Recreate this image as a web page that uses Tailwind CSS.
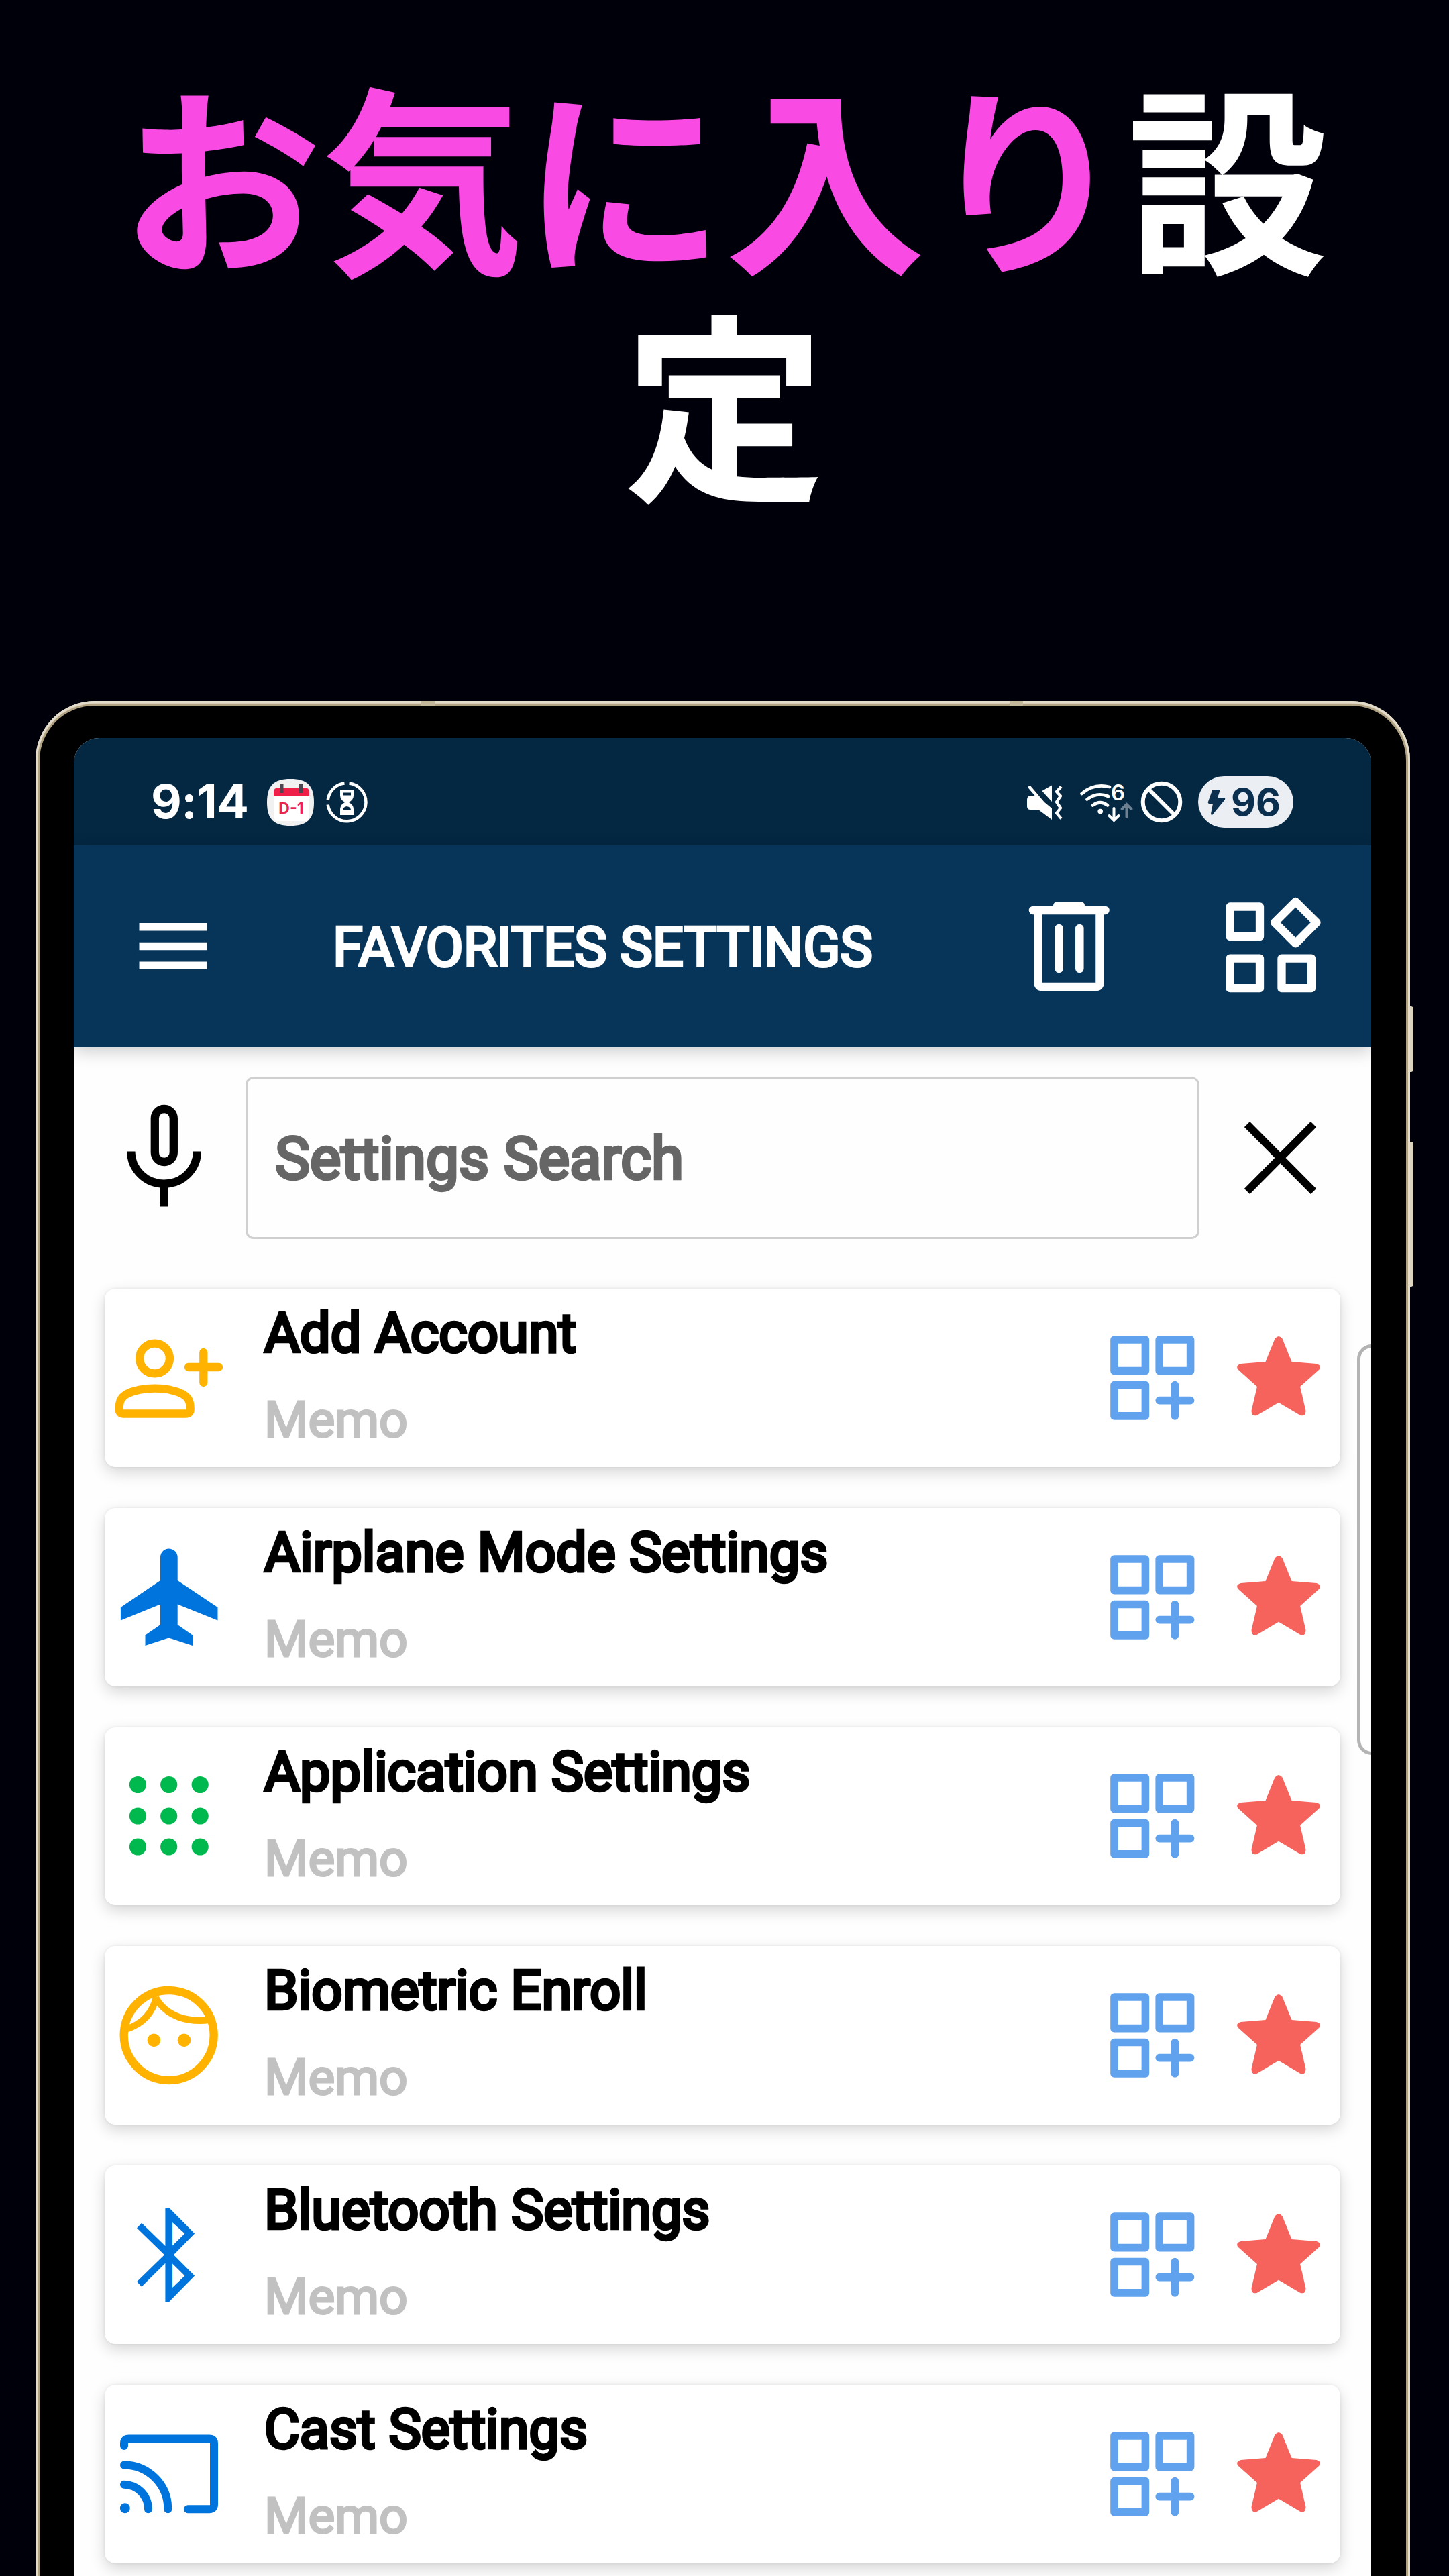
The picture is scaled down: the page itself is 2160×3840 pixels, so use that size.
<!DOCTYPE html>
<html lang="ja">
  <head>
    <meta charset="UTF-8" />
    <meta name="viewport" content="width=device-width, initial-scale=1.0" />
    <title>お気に入り設定</title>
    <script src="https://cdn.jsdelivr.net/npm/@tailwindcss/browser@4"></script>
  </head>
  <body class="w-[2160px] h-[3840px] overflow-hidden bg-[#00000a] font-['Roboto','Noto_Sans_CJK_JP',sans-serif]">
    <!-- heading -->
    <h1
      class="h-[1045px] pt-[86px] px-[150px] text-center text-[300px] leading-[338px] font-bold text-white font-['Noto_Sans_CJK_JP',sans-serif]"
    >
      <span class="text-[#fa4ae4]">お気に入り</span>設定
    </h1>

    <!-- phone -->
    <div
      class="relative ml-[53px] w-[2049px] h-[2795px] rounded-t-[88px] bg-[#d9cfb8] pt-[7px] px-[6px] shadow-[inset_0_0_0_3px_#e4dccb]"
    >
      <!-- side keys and antenna bands -->
      <div class="absolute left-[2049px] top-[455px] w-[5px] h-[98px] rounded-r-sm bg-[#ddd4c0]"></div>
      <div class="absolute left-[2049px] top-[657px] w-[5px] h-[216px] rounded-r-sm bg-[#ddd4c0]"></div>
      <div class="absolute left-[575px] top-0 w-[20px] h-[7px] bg-[#c4b89c]"></div>
      <div class="absolute left-[1452px] top-0 w-[20px] h-[7px] bg-[#c4b89c]"></div>

      <div
        class="h-full rounded-t-[82px] bg-black pt-[48px] pl-[51px] pr-[52px] shadow-[0_0_0_3px_#b0a283]"
      >
        <div class="relative h-full rounded-t-[38px] bg-[#fefefe] overflow-hidden">
          <!-- status bar -->
          <div
            class="h-[160px] pt-[31px] pl-[115px] pr-[116px] flex items-center justify-between bg-[#042742] text-white font-['Inter',sans-serif]"
          >
            <div class="flex items-center">
              <span class="w-[173px] text-[70.5px] leading-none font-bold tracking-[-0.5px] whitespace-nowrap">9:14</span>
              <svg class="w-[70px] h-[70px]" viewBox="0 0 70 70">
                <path d="M35 0C60 0 70 10 70 35S60 70 35 70 0 60 0 35 10 0 35 0z" fill="#f1f1f2" />
                <rect x="10" y="14" width="53" height="49" rx="6" fill="#fff" />
                <path d="M10 26v-6q0-7 7-7h39q7 0 7 7v6z" fill="#f01f47" />
                <path d="M22 8v13M50.500 8v13" stroke="#4d4650" stroke-width="5" />
                <text x="36" y="51.500" font-size="23" font-weight="700" text-anchor="middle" fill="#ea2350">D-1</text>
              </svg>
              <svg class="ml-[18px] w-[62px] h-[64px]" viewBox="0 0 62 64" fill="none">
                <path d="M34.500 3.500A28.500 28.500 0 1 1 2.700 35.500M2.700 28.500A28.500 28.500 0 0 1 27.500 3.500" stroke="#fff" stroke-width="4.500" />
                <path fill-rule="evenodd" d="M21 13h20v9q0 6-7 10q7 4 7 10v9H21v-9q0-6 7-10q-7-4-7-10zM25 17.500h12v4H25zM25 44q0-5 6-6q6 1 6 6z" fill="#fff" />
              </svg>
            </div>
            <div class="flex items-center">
              <svg class="w-[54px] h-[54px]" viewBox="0 0 54 54">
                <path d="M1 23q0-6 6-6h8L38 36v17L18 38H6q-5 0-5-5zM23.400 10L38 1.500V26z" fill="#fff" />
                <path d="M5 4.500L24 27" stroke="#fff" stroke-width="4.500" stroke-linecap="round" />
                <path d="M52 3.500L45 11l6 6.500-6 9 6 9-6 7.500 7 8.500" fill="none" stroke="#fff" stroke-width="4.300" stroke-linejoin="round" />
              </svg>
              <svg class="ml-[25px] w-[80px] h-[60px] overflow-visible" viewBox="0 0 80 60" fill="none" stroke="#fff" stroke-width="4.700" stroke-linecap="round">
                <path d="M3.500 17Q22 1 45 7M11.500 25.500Q26 14 43 21M20 34.500Q31 26 42 34.500" />
                <circle cx="31.200" cy="43.600" r="3.800" fill="#fff" stroke="none" />
                <text x="47" y="27" font-size="33" font-weight="600" fill="#fff" stroke="none">6</text>
                <path d="M51.500 39v17M44.500 50l7 7 7-7" stroke-width="4" />
                <path d="M70.500 52V34M63.500 40l7-7 7 7" stroke="#6d8192" stroke-width="4" />
              </svg>
              <svg class="ml-[11px] w-[63px] h-[63px]" viewBox="0 0 63 63" fill="none" stroke="#fff" stroke-width="6">
                <circle cx="31.500" cy="31.500" r="27.800" />
                <path d="M12 12l39 39" />
              </svg>
              <div class="ml-[23px] w-[142px] h-[77px] pl-[14px] flex items-center rounded-full bg-[#ebeff3] text-[#0b304f]">
                <svg class="w-[27px] h-[40px]" viewBox="0 0 27 40">
                  <path d="M9 1h10l-4 12h10q2 1 1 3L7 39q-2 0-2-2l3-15H2q-2-1-1-3L7 2z" fill="#0b304f" />
                </svg>
                <span class="ml-[8px] text-[57px] leading-none font-bold">96</span>
              </div>
            </div>
          </div>

          <!-- toolbar -->
          <div
            class="relative h-[301px] pl-[97px] pr-[74px] flex items-center bg-[#073559] shadow-[0_6px_24px_rgba(0,0,0,0.2)]"
          >
            <svg class="w-[102px] h-[70px]" viewBox="0 0 102 70" fill="#fff">
              <path d="M.5 0h101v11.500H.5zM.5 28.700h101v11.500H.5zM.5 57.500h101V69H.5z" />
            </svg>
            <div class="ml-[187px] w-[1037px] pt-[4px] text-[81.2px] leading-none font-normal text-white whitespace-nowrap [-webkit-text-stroke:4px_white]">
              FAVORITES SETTINGS
            </div>
            <svg class="w-[122px] h-[134px]" viewBox="0 0 122 134" fill="none" stroke="#fff" stroke-width="12.500">
              <path d="M7 13h107.500" stroke-linecap="round" />
              <path d="M37 10V6q0-5.500 6-5.500h35q6 0 6 5.500v4z" fill="#fff" stroke="none" />
              <path d="M14.500 14v107q0 6 6 6h80q6 0 6-6V14" />
              <path d="M45.600 40v60M76.300 40v60" stroke-linecap="round" />
            </svg>
            <svg class="ml-[172px] -mt-[5px] w-[143px] h-[144px]" viewBox="0 0 143 144" fill="none" stroke="#fff" stroke-width="12.300" stroke-linejoin="round">
              <path d="M6.600 15.500h44.400v44.700H6.600zM6.600 92.700h44.400v44.500H6.600zM83.500 92.700H128v44.500H83.500zM104.300 8L135.500 39.200 104.300 70.400 73.100 39.200z" />
            </svg>
          </div>

          <!-- search -->
          <div class="h-[286px] mt-[44px] pl-[78px] flex items-start">
            <svg class="mt-[41px] w-[113px] h-[153px]" viewBox="0 0 113 153" fill="none" stroke="#000" stroke-width="12.300">
              <rect x="42.800" y="7" width="28" height="79" rx="14" />
              <path d="M7.300 70.600a49.300 48 0 0 0 98.600 0M56.600 119v33.500" />
            </svg>
            <div
              class="ml-[65px] w-[1422px] h-[242px] pl-[41px] pt-[4px] flex items-center rounded-[12px] border-[3px] border-[#d0d0d0] text-[87.4px] leading-none font-normal text-[#666] whitespace-nowrap [-webkit-text-stroke:4.5px_#666]"
            >
              Settings Search
            </div>
            <svg class="ml-[67px] mt-[67px] w-[107px] h-[108px]" viewBox="0 0 107 108" stroke="#000" stroke-width="11.500">
              <path d="M4 4l99 100M103 4L4 104" />
            </svg>
          </div>

          <!-- settings list -->
          <div id="list" class="ml-[46px] w-[1842px] mt-[30px] flex flex-col gap-[61px]"></div>

          <!-- edge panel handle -->
          <div class="absolute left-[1913px] top-[904px] w-[44px] h-[612px] rounded-[24px] border-[5px] border-[#b4b4b4] bg-[#fefefe]"></div>
        </div>
      </div>
    </div>

    <script>
      const items = [
        {
          name: "Add Account",
          icon: `<g fill="none" stroke="#ffb300" stroke-width="12.300" stroke-linecap="round">
            <circle cx="66.500" cy="59" r="22.400" />
            <path d="M20 141.500H113Q119.700 141.500 119.700 135C119.700 121 116 117 108 112C96 106 82 103.700 66.600 103.700C51 103.700 37 106 25 112C17 117 13.700 121 13.700 135Q13.700 141.500 20 141.500Z" />
            <path d="M117 72h45M139.300 50v45" /></g>`,
        },
        {
          name: "Airplane Mode Settings",
          icon: `<path fill="#0074dd" d="M75 62.900V28.400a12.800 12.800 0 0 1 25.700 0V62.900L160.500 102.900V122.500L100.700 98.400V129L123 144.500V160L87.700 148.600 52.500 160V144.500L75 129V98.400L15.900 122.500V102.900Z" />`,
        },
        {
          name: "Application Settings",
          icon: `<g fill="#00b94e">
            <circle cx="41.500" cy="41.500" r="12.600" /><circle cx="87.700" cy="41.500" r="12.600" /><circle cx="134.200" cy="41.500" r="12.600" />
            <circle cx="41.500" cy="88" r="12.600" /><circle cx="87.700" cy="88" r="12.600" /><circle cx="134.200" cy="88" r="12.600" />
            <circle cx="41.500" cy="134" r="12.600" /><circle cx="87.700" cy="134" r="12.600" /><circle cx="134.200" cy="134" r="12.600" /></g>`,
        },
        {
          name: "Biometric Enroll",
          icon: `<g fill="none" stroke="#ffb300"><circle cx="87.700" cy="88" r="67" stroke-width="12.300" />
            <path d="M69 30C64 55 48 71 24 79M68 32C84 60 115 69 149 65" stroke-width="10" /></g>
            <circle cx="65.400" cy="95.400" r="9.800" fill="#ffb300" /><circle cx="110.500" cy="95.400" r="9.800" fill="#ffb300" />`,
        },
        {
          name: "Bluetooth Settings",
          icon: `<path fill="#0074dd" fill-rule="evenodd" d="M82.400 18.200H88.200L126.100 56.400 94.900 88.200 126.100 119.500 88.200 158.200H82.400V100.700L47.100 135.700 40 128.200 81 88.200 40 48.200 47.100 40.700 82.400 75ZM93.100 40.100V74.500L111.400 56.400ZM93.100 101.500V137L111.400 119.500Z" />`,
        },
        {
          name: "Cast Settings",
          icon: `<g fill="none" stroke="#0074dd" stroke-width="12" stroke-linecap="round">
            <path d="M21 46V42Q21 35.500 28 35.500H148Q155 35.500 155 42V133.500Q155 140.200 148 140.200H116" />
            <path d="M21 74.400A65.500 65.500 0 0 1 86.300 140.200M21 103.700A36.500 36.500 0 0 1 57 140.200" /></g>
            <circle cx="22.300" cy="138.800" r="7.500" fill="#0074dd" />`,
        },
      ];

      document.getElementById("list").innerHTML = items
        .map(
          (item) => `
        <div class="h-[265.8px] pl-[8px] pr-[30px] flex items-center rounded-[16px] bg-white shadow-[0_8px_22px_rgba(0,0,0,0.16),0_0_4px_rgba(0,0,0,0.08)]">
          <svg class="w-[176px] h-[176px]" viewBox="0 0 176 176">${item.icon}</svg>
          <div class="ml-[54px] flex-1 self-start whitespace-nowrap">
            <div class="text-[81.2px] leading-[134px] font-normal text-black [-webkit-text-stroke:4.5px_black]">${item.name}</div>
            <div class="text-[75px] leading-[123px] font-normal text-[#c1c1c1] [-webkit-text-stroke:3px_#c1c1c1]">Memo</div>
          </div>
          <svg class="w-[126px] h-[126px]" viewBox="0 0 126 126" fill="none" stroke="#60a2ee" stroke-width="11.600" stroke-linejoin="round" stroke-linecap="round">
            <path d="M6 6h46.400v46.600H6zM73.200 6h46.400v46.600H73.200zM6 73.500h46.400v46.400H6zM73.200 96.600h46.400M96.400 73.500v46.400" />
          </svg>
          <svg class="ml-[63px] -mt-[4px] w-[124px] h-[121px]" viewBox="0 0 124 121">
            <path fill="#f5635c" d="M56.500 4.500Q62-2.500 67.500 4.500L81.500 39 118.500 42Q126.500 44.500 122.500 50.500L94.100 76 102.500 112Q102.500 121 94.500 119L62 99.800 29.500 119Q21.500 121 21.500 112L29.900 76 1.500 50.500Q-2.500 44.500 5.500 42L42.500 39Z" />
          </svg>
        </div>`
        )
        .join("");
    </script>
  </body>
</html>
